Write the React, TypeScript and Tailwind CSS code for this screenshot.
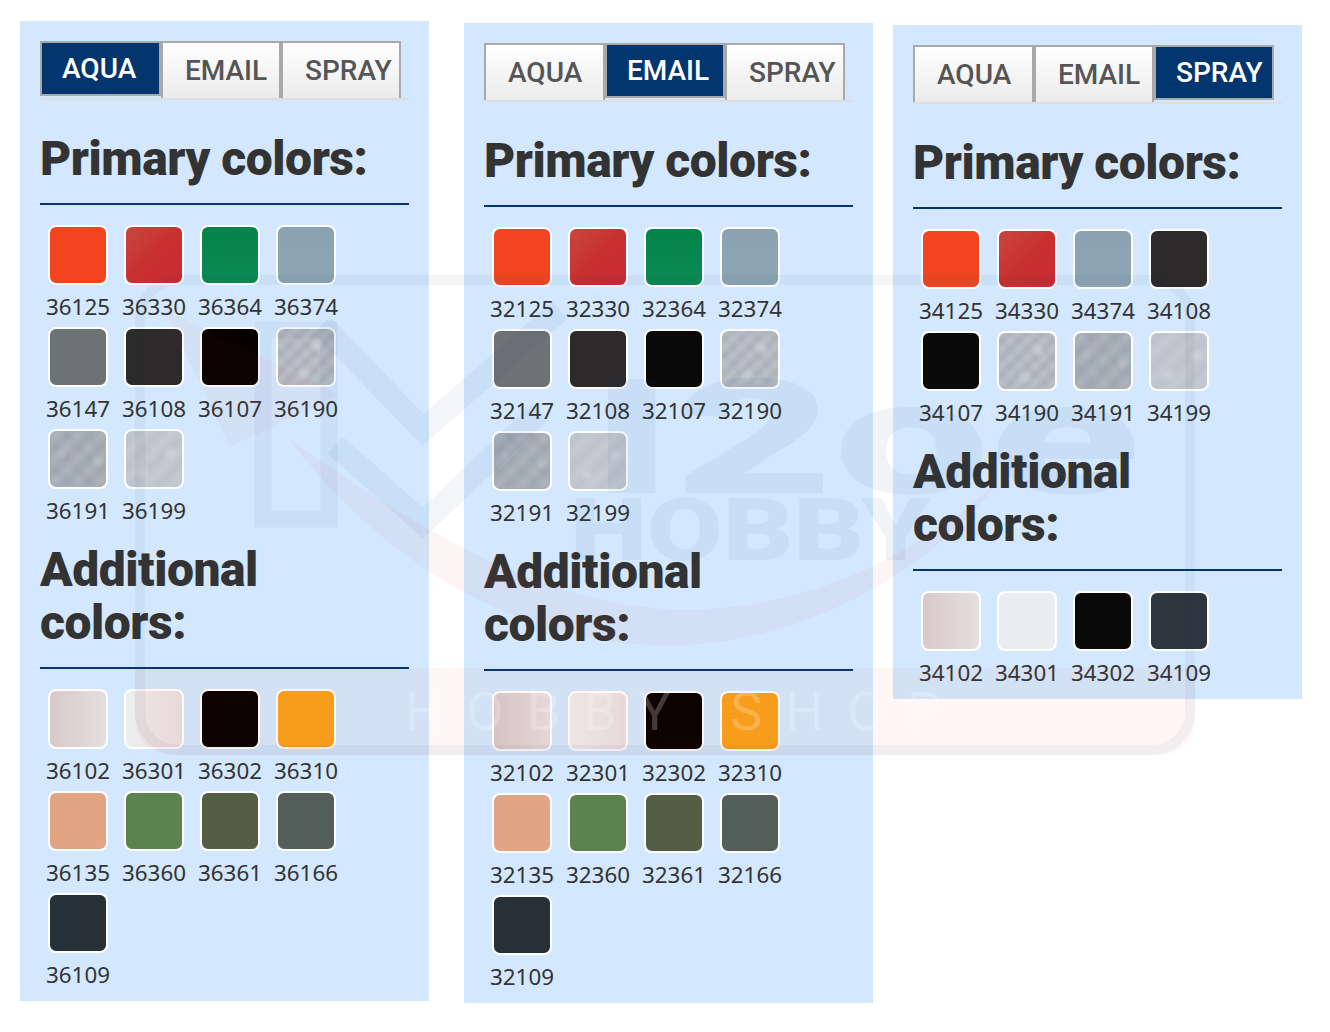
const metalA = "bg-[radial-gradient(circle_at_70%_30%,#c8cdd4_0px,transparent_8px),radial-gradient(circle_at_45%_80%,#c8cdd4_0px,transparent_8px),repeating-linear-gradient(45deg,#ffffff00_0px,#ffffff12_6px,#ffffff00_12px),repeating-linear-gradient(-45deg,#a9b0b9_0px,#b6bcc4_6px,#a9b0b9_12px)]"
const metalB = "bg-[radial-gradient(circle_at_20%_40%,#b4bac2_0px,transparent_7px),radial-gradient(circle_at_85%_55%,#b8bec6_0px,transparent_7px),repeating-linear-gradient(45deg,#ffffff00_0px,#ffffff10_8px,#ffffff00_16px),repeating-linear-gradient(-45deg,#9da5af_0px,#a8afb8_8px,#9da5af_16px)]"
const metalC = "bg-[radial-gradient(circle_at_80%_40%,#cfd3d9_0px,transparent_8px),radial-gradient(circle_at_30%_75%,#cdd1d7_0px,transparent_8px),repeating-linear-gradient(-45deg,#bcc3cb_0px,#c5cad1_9px,#bcc3cb_18px)]"

const red = "bg-gradient-to-br from-[#c9463f] via-[#c8302f] to-[#cb2a35]"
const orange = "bg-[#f2451f]"
const green = "bg-gradient-to-b from-[#02844a] to-[#0c8a53]"
const blueGrey = "bg-gradient-to-b from-[#8ba2b1] to-[#8ea5b3]"
const charcoal = "bg-[#2c2a2b]"
const black = "bg-[#060000]"
const blackGrey = "bg-[#0a0a0a]"
const grey = "bg-[#6d7375]"
const pearl = "bg-gradient-to-r from-[#d8c9ca] to-[#e4dfe0]"
const pearlLight = "bg-gradient-to-r from-[#eeeeee] to-[#eadfe2]"
const amber = "bg-[#f9a11b]"
const flesh = "bg-[#e1a583]"
const fieldGreen = "bg-[#5c834e]"
const olive = "bg-[#535f45]"
const greenGrey = "bg-[#545e5a]"
const navy = "bg-[#272f37]"
const navyLight = "bg-[#2e363f]"
const white = "bg-[#eaecee]"

type Swatch = [string, string]

const aquaPrimary: Swatch[] = [
  ["36125", orange], ["36330", red], ["36364", green], ["36374", blueGrey],
  ["36147", grey], ["36108", charcoal], ["36107", black], ["36190", metalA],
  ["36191", metalB], ["36199", metalC],
]
const aquaAdditional: Swatch[] = [
  ["36102", pearl], ["36301", pearlLight], ["36302", black], ["36310", amber],
  ["36135", flesh], ["36360", fieldGreen], ["36361", olive], ["36166", greenGrey],
  ["36109", navy],
]
const emailPrimary: Swatch[] = [
  ["32125", orange], ["32330", red], ["32364", green], ["32374", blueGrey],
  ["32147", grey], ["32108", charcoal], ["32107", blackGrey], ["32190", metalA],
  ["32191", metalB], ["32199", metalC],
]
const emailAdditional: Swatch[] = [
  ["32102", pearl], ["32301", pearlLight], ["32302", black], ["32310", amber],
  ["32135", flesh], ["32360", fieldGreen], ["32361", olive], ["32166", greenGrey],
  ["32109", navy],
]
const sprayPrimary: Swatch[] = [
  ["34125", orange], ["34330", red], ["34374", blueGrey], ["34108", charcoal],
  ["34107", blackGrey], ["34190", metalA], ["34191", metalB], ["34199", metalC],
]
const sprayAdditional: Swatch[] = [
  ["34102", pearl], ["34301", white], ["34302", blackGrey], ["34109", navyLight],
]

function Tabs({ active }: { active: string }) {
  return (
    <div className="flex items-start border-b-2 border-[#dedede] font-['Roboto',sans-serif]">
      {["AQUA", "EMAIL", "SPRAY"].map((name, i) =>
        name === active ? (
          <div
            key={name}
            className={`h-[55px] ${i === 0 ? "w-[121px]" : "w-[120px]"} border-2 border-[#a9a9a9] bg-[#03356f] pl-[20px] text-[28px] leading-[52px] font-medium text-white`}
          >
            {name}
          </div>
        ) : (
          <div
            key={name}
            className={`h-[57px] ${i === 0 ? "w-[121px]" : "w-[120px]"} border-2 border-b-0 border-[#a9a9a9] bg-gradient-to-b from-white to-[#ebebeb] pl-[22px] text-[28px] leading-[56px] font-medium text-[#555555]`}
          >
            {name}
          </div>
        ),
      )}
    </div>
  )
}

function SwatchGrid({ items }: { items: Swatch[] }) {
  return (
    <div className="mt-[20px] grid grid-cols-[repeat(4,76px)]">
      {items.map(([code, color]) => (
        <div key={code} className="flex h-[102px] flex-col items-center">
          <div className={`h-[60px] w-[60px] shrink-0 rounded-[8px] border-2 border-white ${color}`} />
          <span className="mt-[3px] text-[22.4px] leading-[38px] text-[#333333]">{code}</span>
        </div>
      ))}
    </div>
  )
}

function Heading({ children, className }: { children: React.ReactNode; className: string }) {
  return (
    <h2
      className={`${className} border-b-2 border-[#03356f] pb-[18px] font-['Roboto',sans-serif] text-[48px] leading-[53px] font-black tracking-[-0.45px] text-[#333333]`}
    >
      {children}
    </h2>
  )
}

function Panel({ active, primary, additional, className }: { active: string; primary: Swatch[]; additional: Swatch[]; className: string }) {
  return (
    <section className={`${className} w-[409px] shrink-0 bg-[#d3e8fe] pt-[20px] pr-[20px] pb-[6px] pl-[20px]`}>
      <Tabs active={active} />
      <Heading className="mt-[32px]">Primary colors:</Heading>
      <SwatchGrid items={primary} />
      <Heading className="mt-[12px]">
        Additional
        <br />
        colors:
      </Heading>
      <SwatchGrid items={additional} />
    </section>
  )
}

// faint shop logo that sits over the whole page
function Watermark() {
  return (
    <svg className="pointer-events-none absolute top-0 left-0" width="1330" height="1032" viewBox="0 0 1330 1032">
      <path d="M135 668 H1195 V715 Q1195 755 1155 755 H175 Q135 755 135 715 Z" fill="#f04030" fillOpacity="0.045" />
      <path
        d="M290 440 C380 560 520 650 680 645 C820 640 940 560 1000 480 C900 570 790 610 680 610 C540 605 420 530 290 440 Z"
        fill="#e04040"
        fillOpacity="0.05"
      />
      <path d="M165 310 L230 447 L340 395 Z" fill="#e04040" fillOpacity="0.04" />
      <g fill="#0a3c78" fillOpacity="0.06">
        <rect x="140" y="280" width="1050" height="470" rx="38" fill="none" stroke="#1a3a5a" strokeOpacity="0.05" strokeWidth="10" />
        <rect x="263" y="330" width="66" height="189" fill="none" stroke="#0a3c78" strokeOpacity="0.05" strokeWidth="17" />
        <polyline points="322,325 423,430 560,310" fill="none" stroke="#0a3c78" strokeOpacity="0.05" strokeWidth="23" />
        <polyline points="335,445 423,523 540,412" fill="none" stroke="#0a3c78" strokeOpacity="0.05" strokeWidth="23" />
        <text x="590" y="493" fontFamily="Roboto, sans-serif" fontWeight="900" fontSize="160" textLength="550" lengthAdjust="spacingAndGlyphs">
          I2oe
        </text>
        <text x="570" y="560" fontFamily="Roboto, sans-serif" fontWeight="900" fontSize="88" textLength="360" lengthAdjust="spacingAndGlyphs">
          HOBBY
        </text>
      </g>
      <text x="405" y="730" fontFamily="Roboto, sans-serif" fontSize="54" letterSpacing="23" fill="#ffffff" fillOpacity="0.22">
        HOBBY SHOP
      </text>
    </svg>
  )
}

export default function App() {
  return (
    <div className="relative h-[1032px] overflow-hidden bg-white font-['Noto_Sans',sans-serif]">
      <div className="flex items-start pl-[20px]">
        <Panel className="mt-[21px]" active="AQUA" primary={aquaPrimary} additional={aquaAdditional} />
        <Panel className="mt-[23px] ml-[35px]" active="EMAIL" primary={emailPrimary} additional={emailAdditional} />
        <Panel className="mt-[25px] ml-[20px]" active="SPRAY" primary={sprayPrimary} additional={sprayAdditional} />
      </div>
      <Watermark />
    </div>
  )
}
